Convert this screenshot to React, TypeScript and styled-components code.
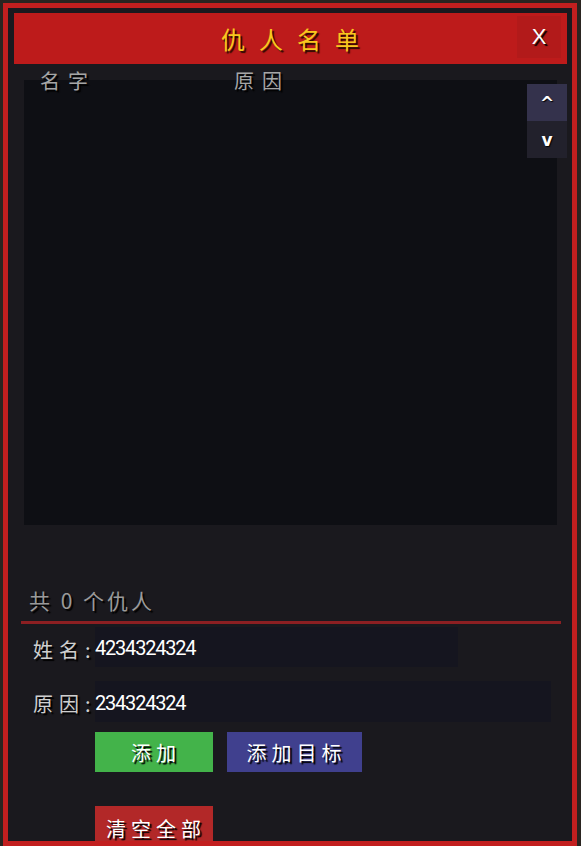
import React, { useState } from "react";
import styled, { createGlobalStyle } from "styled-components";

const GlobalStyle = createGlobalStyle`
  html, body {
    margin: 0;
    padding: 0;
    background: #2a2420;
    overflow: hidden;
  }
  * { box-sizing: border-box; }
`;

const cjk = `"Noto Sans CJK SC", "Noto Sans", sans-serif`;

const Panel = styled.div`
  margin: 3px 0 0 3px;
  width: 574px;
  height: 843px;
  border: 5px solid #c21f1f;
  background: #1a191e;
  padding: 5px 5px 0 6px;
  overflow: hidden;
  display: flex;
  flex-direction: column;
  font-family: ${cjk};
`;

const Header = styled.div`
  position: relative;
  height: 51px;
  flex-shrink: 0;
  background: #bd1b1b;
  display: flex;
  align-items: center;
  justify-content: center;
`;

const Title = styled.h1`
  margin: 0;
  padding-left: 13px;
  font-size: 24px;
  font-weight: 400;
  letter-spacing: 14px;
  color: #f7c81e;
  text-shadow: 2px 2px 1px #2a0a00;
`;

const CloseButton = styled.button`
  position: absolute;
  right: 6px;
  top: 3px;
  width: 44px;
  height: 42px;
  border: none;
  background: #b21a1a;
  color: #fff;
  font-family: "Liberation Sans", sans-serif;
  font-size: 22px;
  text-shadow: 2px 2px 1px #000;
  cursor: pointer;
`;

const ColumnHeads = styled.div`
  position: relative;
  z-index: 1;
  height: 16px;
  flex-shrink: 0;
  display: flex;
  line-height: 34px;
  font-size: 20px;
  letter-spacing: 8px;
  color: #a6a6a6;
  text-shadow: 2px 2px 1px #000;
`;

const HeadCell = styled.span<{ $left: number }>`
  margin-left: ${(p) => p.$left}px;
  white-space: nowrap;
`;

const ListWrap = styled.div`
  position: relative;
  margin: 0 10px;
  height: 445px;
  flex-shrink: 0;
  background: #0e0f14;
`;

const ScrollButtons = styled.div`
  position: absolute;
  top: 4px;
  right: -10px;
  display: flex;
  flex-direction: column;
`;

const ScrollButton = styled.button<{ $active?: boolean }>`
  width: 40px;
  height: 37px;
  border: none;
  padding: 0;
  background: ${(p) => (p.$active ? "#34324c" : "#22212c")};
  color: #fff;
  font-family: "DejaVu Sans", sans-serif;
  font-size: 17px;
  font-weight: 700;
  text-shadow: 1px 1px 1px #000;
  cursor: pointer;
`;

const CountLabel = styled.div`
  margin: 60px 0 0 15px;
  height: 30px;
  line-height: 30px;
  flex-shrink: 0;
  font-size: 21px;
  letter-spacing: 3px;
  color: #9a9a9a;
  text-shadow: 2px 2px 1px #000;
  white-space: pre;
`;

const Divider = styled.div`
  margin: 6px 6px 0 7px;
  height: 3px;
  flex-shrink: 0;
  background: #8c1f22;
`;

const FieldRow = styled.div<{ $top: number; $h: number }>`
  display: flex;
  align-items: center;
  margin-top: ${(p) => p.$top}px;
  height: ${(p) => p.$h}px;
  flex-shrink: 0;
  padding-left: 19px;
`;

const FieldLabel = styled.label`
  width: 62px;
  flex-shrink: 0;
  font-size: 20px;
  letter-spacing: 6px;
  color: #cfcfcf;
  text-shadow: 2px 2px 1px #000;
  white-space: nowrap;
  padding-top: 4px;
`;

const FieldInput = styled.input<{ $w: number }>`
  width: ${(p) => p.$w}px;
  height: 100%;
  border: none;
  outline: none;
  padding: 2px 0 0 0;
  background: #15151f;
  color: #fff;
  font-family: Roboto, "Liberation Sans", sans-serif;
  font-size: 20px;
  letter-spacing: -1.2px;
`;

const ButtonRow = styled.div<{ $top: number }>`
  display: flex;
  gap: 14px;
  margin-top: ${(p) => p.$top}px;
  padding-left: 81px;
  flex-shrink: 0;
`;

const ActionButton = styled.button<{ $bg: string; $w: number; $h?: number }>`
  width: ${(p) => p.$w}px;
  height: ${(p) => p.$h ?? 40}px;
  border: none;
  padding: 0 0 0 4px;
  background: ${(p) => p.$bg};
  color: #fff;
  font-family: ${cjk};
  font-size: 20px;
  letter-spacing: 5px;
  text-shadow: 2px 2px 1px #000;
  cursor: pointer;
`;

export default function App() {
  const [name, setName] = useState("4234324324");
  const [reason, setReason] = useState("234324324");
  const enemies: { name: string; reason: string }[] = [];

  return (
    <>
      <GlobalStyle />
      <Panel>
        <Header>
          <Title>仇人名单</Title>
          <CloseButton>X</CloseButton>
        </Header>
        <ColumnHeads>
          <HeadCell $left={26}>名字</HeadCell>
          <HeadCell $left={138}>原因</HeadCell>
        </ColumnHeads>
        <ListWrap>
          <ScrollButtons>
            <ScrollButton $active>^</ScrollButton>
            <ScrollButton>v</ScrollButton>
          </ScrollButtons>
        </ListWrap>
        <CountLabel>{`共 ${enemies.length} 个仇人`}</CountLabel>
        <Divider />
        <FieldRow $top={3} $h={40}>
          <FieldLabel>姓名:</FieldLabel>
          <FieldInput $w={363} value={name} onChange={(e) => setName(e.target.value)} />
        </FieldRow>
        <FieldRow $top={14} $h={41}>
          <FieldLabel>原因:</FieldLabel>
          <FieldInput $w={456} value={reason} onChange={(e) => setReason(e.target.value)} />
        </FieldRow>
        <ButtonRow $top={10}>
          <ActionButton $bg="#43b34a" $w={118}>添加</ActionButton>
          <ActionButton $bg="#40408e" $w={135}>添加目标</ActionButton>
        </ButtonRow>
        <ButtonRow $top={34}>
          <ActionButton $bg="#b22828" $w={118} $h={44}>清空全部</ActionButton>
        </ButtonRow>
      </Panel>
    </>
  );
}
